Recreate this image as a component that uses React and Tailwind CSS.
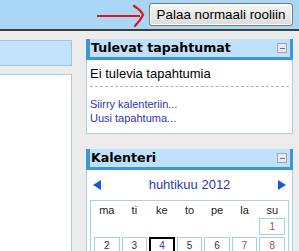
import React from 'react';

const sans = { fontFamily: '"Liberation Sans", Arial, sans-serif' };
const head = { fontFamily: '"DejaVu Sans", Verdana, sans-serif' };

const days = ['ma', 'ti', 'ke', 'to', 'pe', 'la', 'su'];
const weeks = [
  [null, null, null, null, null, null, 1],
  [2, 3, 4, 5, 6, 7, 8],
];

const BlockHeader = ({ title }) => (
  <div className="flex items-center justify-between h-[21px] bg-[#c0e0fb] border-l-[4px] border-r-[3px] border-b-[3px] border-[#3d97d6] pl-[1px] pr-[3px]">
    <span className="text-[12.6px] font-bold text-black leading-none" style={head}>
      {title}
    </span>
    <span className="w-[10px] h-[10px] border border-[#9aa6b0] bg-[#e4ecf2] flex items-center justify-center">
      <span className="w-[5px] h-[1px] bg-[#6b7680]" />
    </span>
  </div>
);

const App = () => {
  return (
    <div className="w-[299px] h-[251px] overflow-hidden bg-[#ececec]" style={sans}>
      <div className="h-[31px] bg-[#a9d6f4] border-b-2 border-[#3a3f44] flex items-center justify-end pr-[6px]">
        <svg width="50" height="24" viewBox="0 0 50 24" className="mr-[3px]">
          <path d="M1 13 L44 13" stroke="#e3121b" strokeWidth="2" fill="none" />
          <path d="M38 3 C43 6 46 9 47 12 C45 16 42 20 39 23" stroke="#e3121b" strokeWidth="2.2" fill="none" strokeLinecap="round" />
        </svg>
        <button className="h-[23px] w-[144px] rounded-[3px] border border-[#7a7a7a] bg-gradient-to-b from-[#f7f7f7] to-[#dcdcdc] text-[13.4px] text-black leading-none shadow-[inset_0_0_0_1px_#fcfcfc]">
          Palaa normaali rooliin
        </button>
      </div>

      <div className="flex items-start pt-[8px]">
        <div className="w-[72px] mt-[1px] shrink-0">
          <div className="h-[26px] bg-[#c2e1fb] border border-l-0 border-[#9cc8e8]" />
          <div className="mt-[8px] h-[200px] bg-white border border-l-0 border-[#a8cde8]" />
        </div>

        <div className="w-[207px] ml-[14px] shrink-0">
          <BlockHeader title="Tulevat tapahtumat" />
          <div className="bg-white border-x border-b border-[#a6cfe9] px-[3px] pt-[6px] pb-[8px]">
            <div className="text-[13px] text-black leading-[15px] pb-[5px] border-b border-dashed border-[#a9b4bd]">
              Ei tulevia tapahtumia
            </div>
            <div className="mt-[10px] text-[11px] leading-[14px] text-[#2b36b0]">
              <div>Siirry kalenteriin...</div>
              <div>Uusi tapahtuma...</div>
            </div>
          </div>

          <div className="mt-[15px]">
            <BlockHeader title="Kalenteri" />
            <div className="bg-white border-x border-[#a6cfe9] px-[3px] pb-[20px]">
              <div className="h-[30px] flex items-center justify-between px-[3px]">
                <svg width="8" height="10" viewBox="0 0 8 10">
                  <path d="M0 5 L8 0 L8 10 Z" fill="#1d58d4" />
                </svg>
                <span className="text-[13px] text-[#2b3aae]">huhtikuu 2012</span>
                <svg width="8" height="10" viewBox="0 0 8 10">
                  <path d="M8 5 L0 0 L0 10 Z" fill="#1d58d4" />
                </svg>
              </div>
              <div className="border border-[#a6cfe9] px-[3px] pb-[4px]">
                <div className="grid grid-cols-7 gap-x-[2px] h-[15px] items-end">
                  {days.map((d) => (
                    <div key={d} className="text-center text-[11px] leading-[12px] text-[#222]">
                      {d}
                    </div>
                  ))}
                </div>
                {weeks.map((w, i) => (
                  <div key={i} className="grid grid-cols-7 gap-x-[2px] mt-[2px]">
                    {w.map((n, j) =>
                      n === null ? (
                        <div key={j} className="h-[17px]" />
                      ) : (
                        <div
                          key={j}
                          className={
                            n === 4
                              ? 'h-[17px] border-2 border-black flex items-center justify-center text-[10px] text-[#2b3aae]'
                              : j >= 5
                              ? 'h-[17px] border border-[#a6cfe9] flex items-center justify-center text-[10px] text-[#d43a3a]'
                              : 'h-[17px] border border-[#a6cfe9] flex items-center justify-center text-[10px] text-[#333]'
                          }
                        >
                          {n}
                        </div>
                      )
                    )}
                  </div>
                ))}
              </div>
            </div>
          </div>
        </div>
      </div>
    </div>
  );
};

export default App;
